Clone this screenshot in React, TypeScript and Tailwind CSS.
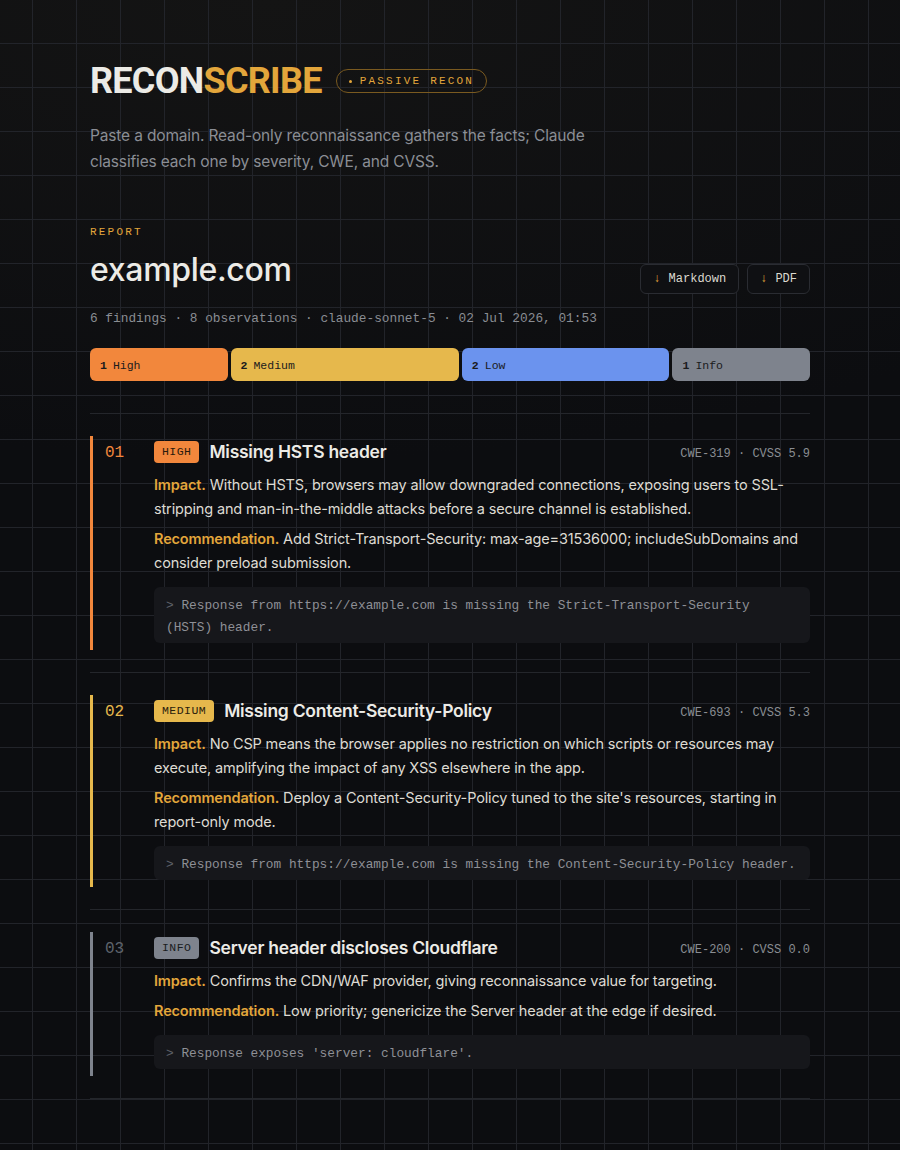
import { ReactNode } from 'react';

type Severity = 'high' | 'medium' | 'low' | 'info';

const sevStyles: Record<Severity, { bar: string; badge: string; num: string; rail: string }> = {
    high: { bar: 'bg-[#f2873c]', badge: 'bg-[#f2873c] text-[#2a1a0c]', num: 'text-[#f2873c]', rail: 'border-[#f2873c]' },
    medium: { bar: 'bg-[#e6b84c]', badge: 'bg-[#e6b84c] text-[#2a210c]', num: 'text-[#e6b84c]', rail: 'border-[#e6b84c]' },
    low: { bar: 'bg-[#6b93ee]', badge: 'bg-[#6b93ee] text-[#0f1a33]', num: 'text-[#6b93ee]', rail: 'border-[#6b93ee]' },
    info: { bar: 'bg-[#7e838d]', badge: 'bg-[#7e838d] text-[#1a1c21]', num: 'text-[#5e636c]', rail: 'border-[#7e838d]' },
};

const findings = [
    {
        n: '01',
        sev: 'high' as Severity,
        label: 'HIGH',
        title: 'Missing HSTS header',
        cwe: 'CWE-319',
        cvss: '5.9',
        impact: 'Without HSTS, browsers may allow downgraded connections, exposing users to SSL-stripping and man-in-the-middle attacks before a secure channel is established.',
        rec: 'Add Strict-Transport-Security: max-age=31536000; includeSubDomains and consider preload submission.',
        evidence: 'Response from https://example.com is missing the Strict-Transport-Security (HSTS) header.',
    },
    {
        n: '02',
        sev: 'medium' as Severity,
        label: 'MEDIUM',
        title: 'Missing Content-Security-Policy',
        cwe: 'CWE-693',
        cvss: '5.3',
        impact: 'No CSP means the browser applies no restriction on which scripts or resources may execute, amplifying the impact of any XSS elsewhere in the app.',
        rec: "Deploy a Content-Security-Policy tuned to the site's resources, starting in report-only mode.",
        evidence: 'Response from https://example.com is missing the Content-Security-Policy header.',
    },
    {
        n: '03',
        sev: 'info' as Severity,
        label: 'INFO',
        title: 'Server header discloses Cloudflare',
        cwe: 'CWE-200',
        cvss: '0.0',
        impact: 'Confirms the CDN/WAF provider, giving reconnaissance value for targeting.',
        rec: 'Low priority; genericize the Server header at the edge if desired.',
        evidence: "Response exposes 'server: cloudflare'.",
    },
];

const mono = "font-['Liberation_Mono','DejaVu_Sans_Mono',monospace]";

function DownloadButton({ children }: { children: ReactNode }) {
    return (
        <button className={`flex h-[30px] items-center gap-2 rounded-md border border-[#2a2c32] bg-[#0f1013] px-3 text-[12px] text-[#dcd9d0] ${mono}`}>
            <span className="text-[#e3a63b]">↓</span>
            {children}
        </button>
    );
}

export default function App() {
    return (
        <div className="min-h-screen bg-[#0c0d10] [background-image:linear-gradient(to_right,#22242a_1px,transparent_1px),linear-gradient(to_bottom,#22242a_1px,transparent_1px),radial-gradient(ellipse_120%_40%_at_30%_0%,#141414,transparent)] [background-size:44px_44px,44px_44px,100%_100%] [background-position:32px_43px,32px_43px,0_0] font-['Inter',sans-serif]">
            <main className="mx-auto w-[720px] pt-[63px] pb-12">
                {/* Brand */}
                <header>
                    <div className="flex items-center gap-[14px]">
                        <h1 className="font-['Roboto',sans-serif] text-[36px] leading-9 font-bold tracking-[-0.02em] text-[#ecebe6]">
                            RECON<span className="text-[#e3a63b]">SCRIBE</span>
                        </h1>
                        <span className={`flex h-6 items-center gap-2 rounded-full border border-[#7a5a20] px-3 text-[11px] tracking-[0.2em] text-[#e3a63b] ${mono}`}>
                            <span className="h-[3px] w-[3px] rounded-full bg-[#e3a63b]" />
                            PASSIVE RECON
                        </span>
                    </div>
                    <p className="mt-[24px] max-w-[510px] text-[15.5px] leading-[26px] tracking-[-0.01em] text-[#8b8e95]">
                        Paste a domain. Read-only reconnaissance gathers the facts; Claude classifies each one by severity, CWE, and CVSS.
                    </p>
                </header>

                {/* Report header */}
                <section className="mt-[49px]">
                    <div className="flex items-end justify-between">
                        <div>
                            <div className={`text-[11px] leading-4 tracking-[0.2em] text-[#e3a63b] ${mono}`}>REPORT</div>
                            <h2 className="mt-[9px] text-[32px] leading-[42px] font-medium tracking-[-0.01em] text-[#ecebe6]">example.com</h2>
                        </div>
                        <div className="mb-[-3px] flex gap-2">
                            <DownloadButton>Markdown</DownloadButton>
                            <DownloadButton>PDF</DownloadButton>
                        </div>
                    </div>
                    <div className={`mt-[18px] text-[12.8px] leading-5 text-[#8a8d93] ${mono}`}>
                        6 findings · 8 observations · claude-sonnet-5 · 02 Jul 2026, 01:53
                    </div>

                    {/* Severity distribution */}
                    <div className={`mt-[19px] flex h-[33px] gap-[3px] text-[11.5px] text-[#1b1b1d] ${mono}`}>
                        <div className="flex grow items-center gap-1.5 rounded-md bg-[#f2873c] px-2.5 pt-0.5">
                            <b>1</b>High
                        </div>
                        <div className="flex grow-[2] items-center gap-1.5 rounded-md bg-[#e6b84c] px-2.5 pt-0.5">
                            <b>2</b>Medium
                        </div>
                        <div className="flex grow-[2] items-center gap-1.5 rounded-md bg-[#6b93ee] px-2.5 pt-0.5">
                            <b>2</b>Low
                        </div>
                        <div className="flex grow items-center gap-1.5 rounded-md bg-[#7e838d] px-2.5 pt-0.5">
                            <b>1</b>Info
                        </div>
                    </div>
                </section>

                {/* Findings */}
                <ol className="mt-8 border-t border-[#24262b]">
                    {findings.map((f) => {
                        const s = sevStyles[f.sev];
                        return (
                            <li key={f.n} className="border-b border-[#24262b] py-[22px]">
                                <article className={`flex border-l-[3px] ${s.rail} pb-[7px] pl-3`}>
                                    <div className={`w-[49px] shrink-0 pt-[5px] text-[16px] leading-6 ${mono} ${s.num}`}>{f.n}</div>
                                    <div className="min-w-0 flex-1">
                                        <div className="flex h-8 items-center justify-between">
                                            <div className="flex items-center gap-2.5">
                                                <span className={`flex h-[22px] items-center rounded px-2 text-[11.5px] tracking-[0.04em] ${mono} ${s.badge}`}>
                                                    {f.label}
                                                </span>
                                                <h3 className="text-[17.5px] font-semibold tracking-[-0.015em] text-[#ecebe6]">{f.title}</h3>
                                            </div>
                                            <span className={`pt-1 text-[12px] text-[#8a8d93] ${mono}`}>
                                                {f.cwe} · CVSS {f.cvss}
                                            </span>
                                        </div>
                                        <p className="mt-[5px] text-[14.5px] leading-6 tracking-[-0.01em] text-[#dedbd3]">
                                            <b className="font-semibold text-[#e3a63b]">Impact.</b> {f.impact}
                                        </p>
                                        <p className="mt-1.5 text-[14.5px] leading-6 tracking-[-0.01em] text-[#dedbd3]">
                                            <b className="font-semibold text-[#e3a63b]">Recommendation.</b> {f.rec}
                                        </p>
                                        <div className={`mt-3 rounded-md bg-[#16171b] px-3 pt-[8px] pb-[4px] text-[12.8px] leading-[22px] text-[#8e9096] ${mono}`}>
                                            <span className="text-[#5f626a]">&gt;</span> {f.evidence}
                                        </div>
                                    </div>
                                </article>
                            </li>
                        );
                    })}
                </ol>
            </main>
        </div>
    );
}
